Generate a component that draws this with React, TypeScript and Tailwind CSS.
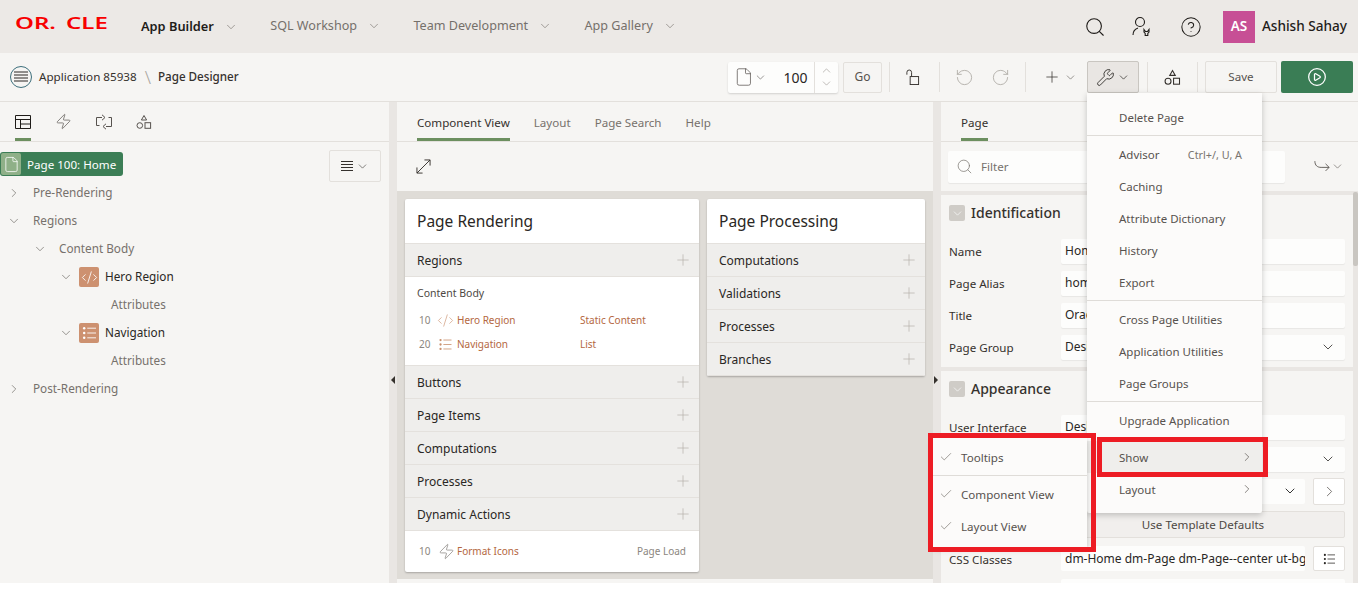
import React from 'react';
import { Check, ChevronDown, ChevronRight, ChevronUp, CircleHelp, CirclePlay, CodeXml, File, Plus, RotateCcw, RotateCw, Search, Wrench, Zap } from 'lucide-react';

const ShapesIcon = ({ className = '' }: { className?: string }) => (
  <svg viewBox="0 0 16 16" fill="none" stroke="currentColor" strokeWidth="1" className={className}>
    <path d="M8 1.5 10.6 6H5.4z" />
    <circle cx="3.8" cy="11.5" r="2.8" />
    <rect x="9" y="8.7" width="5.6" height="5.6" />
  </svg>
);

const DotList = ({ className = '' }: { className?: string }) => (
  <svg viewBox="0 0 16 16" fill="none" stroke="currentColor" className={className}>
    <circle cx="2.5" cy="2.5" r="1.4" fill="currentColor" stroke="none" />
    <circle cx="2.5" cy="8" r="1.4" fill="currentColor" stroke="none" />
    <circle cx="2.5" cy="13.5" r="1.4" fill="currentColor" stroke="none" />
    <path d="M6 2.5h10M6 8h10M6 13.5h10" strokeWidth="1" />
  </svg>
);

const NavItem = ({ label, active }: { label: string; active?: boolean }) => (
  <div className="flex items-center gap-[10px] mr-[32.4px]">
    <span className={active ? 'text-[12.8px] font-semibold text-[#1f1c19]' : 'text-[12.6px] text-[#75706b]'}>{label}</span>
    <ChevronDown size={14} strokeWidth={1.1} className="text-[#75706b]" />
  </div>
);

const Sep = () => <div className="w-px h-[30px] bg-[#e3e0dc]" />;

const TreeRow = ({ indent, label, open, dark, leaf, icon }: { indent: string; label: string; open?: boolean; dark?: boolean; leaf?: boolean; icon?: React.ReactNode }) => (
  <div className={`h-[28px] flex items-center ${indent}`}>
    {!leaf && (open ? <ChevronDown size={14} strokeWidth={1.2} className="text-[#6f6b66] mr-[12px]" /> : <ChevronRight size={14} strokeWidth={1.2} className="text-[#6f6b66] mr-[12px]" />)}
    {icon}
    <span className={dark ? 'text-[11.75px] text-[#2a2724]' : 'text-[11.75px] text-[#76716c]'}>{label}</span>
  </div>
);

const SectionRow = ({ label }: { label: string }) => (
  <div className="h-[33px] bg-[#efeeec] border-b border-[#e4e1dd] flex items-center justify-between pl-[12px] pr-[7px]">
    <span className="text-[12px] text-[#2a2724] pt-[1px]">{label}</span>
    <Plus size={18} strokeWidth={0.9} className="text-[#b3afa8]" />
  </div>
);

const Field = ({ label, value, select }: { label: string; value: string; select?: boolean }) => (
  <div className="h-[32px] flex items-center pl-[8px] pr-[8px]">
    <span className="w-[112px] pt-[2px] text-[11.6px] text-[#35312d]">{label}</span>
    <div className="flex-1 h-[25px] bg-[#fdfdfc] rounded-[2px] shadow-[0_1px_1px_rgba(0,0,0,0.06)] flex items-center justify-between px-[4px] text-[12px] text-[#2a2724]">
      <span className="whitespace-nowrap overflow-hidden">{value}</span>
      {select && <ChevronDown size={16} strokeWidth={1.2} className="mr-[5px]" />}
    </div>
  </div>
);

const SectionHead = ({ label }: { label: string }) => (
  <div className="h-[36px] flex items-center pl-[8px]">
    <div className="w-[16px] h-[16px] rounded-[2px] bg-[#cfccc7] flex items-center justify-center">
      <ChevronDown size={13} strokeWidth={1.2} className="text-white" />
    </div>
    <span className="ml-[6px] pb-[2px] text-[14px] font-medium text-[#35312d]">{label}</span>
  </div>
);

const MenuItem = ({ label, hint, arrow, hot }: { label: string; hint?: string; arrow?: boolean; hot?: boolean }) => (
  <div className={`h-[32px] flex items-center justify-between pl-[32px] pr-[8px] ${hot ? 'bg-[#efeeec]' : ''}`}>
    <span className="pt-[2px] text-[11.5px] text-[#57524e]">{label}</span>
    {hint && <span className="pt-[2px] text-[10.8px] text-[#79746f] mr-[12px]">{hint}</span>}
    {arrow && <ChevronRight size={14} strokeWidth={1.2} className="text-[#57524e]" />}
  </div>
);

const CheckItem = ({ label }: { label: string }) => (
  <div className="h-[32px] flex items-center pl-[6px]">
    <Check size={14} strokeWidth={1.2} className="text-[#79746f] mr-[8px]" />
    <span className="pt-[2px] text-[11.6px] text-[#57524e]">{label}</span>
  </div>
);

const App: React.FC = () => {
  return (
    <div className="relative w-[1358px] h-[594px] overflow-hidden bg-white font-['Noto_Sans',sans-serif]">
      {/* top bar */}
      <header className="h-[53px] bg-[#ece9e6] flex items-center">
        <div className="w-[141px] h-full pl-[15px] pt-[13px] flex overflow-hidden text-[16px] leading-[20px] font-semibold text-[#f80000]">
          <span className="w-[51px] inline-block origin-left scale-x-[1.5]">OR.</span>
          <span className="w-[40px] inline-block origin-left scale-x-[1.5]">CLE</span>
        </div>
        <NavItem label="App Builder" active />
        <NavItem label="SQL Workshop" />
        <NavItem label="Team Development" />
        <NavItem label="App Gallery" />
        <div className="ml-auto flex items-center pr-[11px] text-[#1f1c19]">
          <Search size={22} strokeWidth={1.2} />
          <svg viewBox="0 0 24 24" fill="none" stroke="currentColor" strokeWidth="1.1" className="w-[24px] h-[24px] ml-[24px]">
            <circle cx="10" cy="7" r="4.5" />
            <path d="M3 20c0-4 2-6 5-7M14 14.5l1.5 2h2l1.5-2v2.5l-1.2 1.5v2h-2.6v-2L14 17z" />
          </svg>
          <CircleHelp size={22} strokeWidth={1.1} className="ml-[26px]" />
          <div className="w-[32px] h-[32px] ml-[21px] bg-[#c74f95] flex items-center justify-center text-[13.5px] font-semibold text-white">AS</div>
          <span className="ml-[7px] text-[13.6px] font-medium text-[#1f1c19]">Ashish Sahay</span>
        </div>
      </header>

      {/* page designer toolbar */}
      <div className="h-[49px] bg-[#f6f5f3] border-b border-[#e3e0dc] flex items-center pl-[10px] pr-[5px]">
        <div className="w-[22px] h-[22px] rounded-full border border-[#3d6f7c] flex items-center justify-center">
          <svg viewBox="0 0 14 12" stroke="#2a2724" strokeWidth="1" className="w-[14px] h-[12px]"><path d="M0 1h14M0 4h14M0 7h14M0 10h14" /></svg>
        </div>
        <span className="ml-[7px] text-[11.65px] text-[#35312d]">Application 85938</span>
        <span className="ml-[8px] text-[18px] font-light leading-none text-[#aaa6a0]">\</span>
        <span className="ml-[7px] text-[11.65px] font-medium text-[#35312d]">Page Designer</span>

        <div className="ml-auto flex items-center">
          <div className="w-[110px] h-[31px] bg-[#fdfdfc] rounded-[2px] shadow-[0_1px_2px_rgba(0,0,0,0.15)] flex items-center">
            <File size={20} strokeWidth={0.9} className="ml-[6px] text-[#57524e]" />
            <ChevronDown size={13} strokeWidth={1.1} className="text-[#57524e]" />
            <span className="ml-[17px] w-[26px] text-[14px] text-[#2a2724]">100</span>
            <div className="ml-[5px] w-[24px] h-full border-l border-[#e3e0dc] flex flex-col items-center justify-center">
              <ChevronUp size={13} strokeWidth={1} className="text-[#8b8680]" />
              <ChevronDown size={13} strokeWidth={1} className="text-[#8b8680]" />
            </div>
          </div>
          <div className="ml-[5px] w-[39px] h-[31px] border border-[#e3e0dc] rounded-[2px] flex items-center justify-center text-[12px] text-[#57524e]">Go</div>
          <div className="ml-[7px]"><Sep /></div>
          <svg viewBox="0 0 16 18" fill="none" stroke="#35312d" strokeWidth="1" className="w-[15px] h-[17px] ml-[15px]">
            <rect x="5.5" y="8" width="9" height="8.5" />
            <path d="M2 6V3.5a2.5 2.5 0 0 1 5 0V8" />
          </svg>
          <div className="ml-[19px]"><Sep /></div>
          <RotateCcw size={19} strokeWidth={1} className="ml-[15px] text-[#a8a49d]" />
          <RotateCw size={19} strokeWidth={1} className="ml-[17px] text-[#a8a49d]" />
          <div className="ml-[15px]"><Sep /></div>
          <Plus size={18} strokeWidth={1} className="ml-[17px] text-[#35312d]" />
          <ChevronDown size={13} strokeWidth={1.1} className="ml-[3px] text-[#57524e]" />
          <div className="ml-[10px] w-[52px] h-[32px] bg-[#e9e6e3] border border-[#c9c6c1] rounded-[2px] flex items-center justify-center">
            <Wrench size={19} strokeWidth={1.1} className="text-[#2a2724]" />
            <ChevronDown size={13} strokeWidth={1.3} className="ml-[2px] text-[#2a2724]" />
          </div>
          <div className="ml-[8px]"><Sep /></div>
          <ShapesIcon className="w-[17px] h-[17px] ml-[16px] text-[#35312d]" />
          <div className="ml-[16px]"><Sep /></div>
          <div className="ml-[7px] w-[72px] h-[32px] border border-[#e3e0dc] rounded-[2px] flex items-center justify-center text-[11.6px] text-[#57524e]">Save</div>
          <div className="ml-[4px] w-[72px] h-[32px] bg-[#3a7d55] rounded-[2px] flex items-center justify-center">
            <CirclePlay size={20} strokeWidth={1.5} className="text-white" />
          </div>
        </div>
      </div>

      {/* three panes */}
      <main className="h-[481px] flex bg-[#e9e6e3]">
        <section className="relative w-[389px] bg-[#f6f5f3]">
          <div className="h-[40px] border-b border-[#e3e0dc] flex items-center pl-[15px] gap-[24px] text-[#57524e]">
            <div className="relative h-full w-[16px] flex items-center text-[#1f1c19]">
              <svg viewBox="0 0 16 14" fill="none" stroke="currentColor" strokeWidth="1" className="w-[16px] h-[14px]"><path d="M.5.5h15v13H.5zM.5 4.5h15M5.5 4.5v9M5.5 9h10" /></svg>
              <div className="absolute left-0 bottom-0 w-[16px] h-[3px] bg-[#6c8f5f]" />
            </div>
            <Zap size={17} strokeWidth={1} />
            <svg viewBox="0 0 16 16" fill="none" stroke="currentColor" strokeWidth="1" className="w-[16px] h-[16px]"><path d="M6 3.5H.5v8h3M10 12.5h5.5v-9h-3M6 .8l3 2.7-3 2.7M10 9.8l-3 2.7 3 2.7" /></svg>
            <ShapesIcon className="w-[16px] h-[16px]" />
          </div>
          <div className="h-[37px] flex items-start justify-between pt-[8px] pr-[8px]">
            <div className="h-[24px] w-[123px] mt-[2px] bg-[#3c7e56] rounded-[3px] flex items-center pl-[1px]">
              <div className="w-[20px] h-[22px] bg-[#8fb088] rounded-[2px] flex items-center justify-center">
                <File size={17} strokeWidth={1.1} className="text-white" />
              </div>
              <span className="ml-[6px] pt-[1px] text-[11.6px] text-white whitespace-nowrap">Page 100: Home</span>
            </div>
            <div className="w-[52px] h-[32px] border border-[#e3e0dc] rounded-[2px] flex items-center justify-center text-[#35312d]">
              <svg viewBox="0 0 12 10" stroke="currentColor" strokeWidth="1" className="w-[12px] h-[10px]"><path d="M0 .5h12M0 3.5h12M0 6.5h12M0 9.5h12" /></svg>
              <ChevronDown size={13} strokeWidth={1.1} className="ml-[3px]" />
            </div>
          </div>
          <TreeRow indent="pl-[7px]" label="Pre-Rendering" />
          <TreeRow indent="pl-[7px]" label="Regions" open />
          <TreeRow indent="pl-[33px]" label="Content Body" open />
          <TreeRow indent="pl-[59px]" label="Hero Region" open dark icon={
            <div className="w-[20px] h-[20px] -ml-[6px] mr-[6px] bg-[#cd9170] rounded-[2px] flex items-center justify-center"><CodeXml size={17} strokeWidth={1.2} className="text-white" /></div>
          } />
          <TreeRow indent="pl-[111px]" label="Attributes" leaf />
          <TreeRow indent="pl-[59px]" label="Navigation" open dark icon={
            <div className="w-[20px] h-[20px] -ml-[6px] mr-[6px] bg-[#cd9170] rounded-[2px] flex items-center justify-center"><DotList className="w-[16px] h-[14px] text-white" /></div>
          } />
          <TreeRow indent="pl-[111px]" label="Attributes" leaf />
          <TreeRow indent="pl-[7px]" label="Post-Rendering" />
          <div className="absolute left-[391px] top-[274px] w-0 h-0 border-y-[4px] border-y-transparent border-r-[4px] border-r-[#35312d]" />
        </section>

        <section className="relative w-[536px] ml-[8px] bg-[#f6f5f3] flex flex-col">
          <div className="h-[40px] border-b border-[#e3e0dc] flex pl-[20px] gap-[24px] text-[11.6px] text-[#76716c]">
            <div className="relative flex items-center pt-[2px] text-[#35312d]">
              Component View
              <div className="absolute left-0 right-0 bottom-0 h-[3px] bg-[#6c8f5f]" />
            </div>
            <div className="flex items-center pt-[2px]">Layout</div>
            <div className="flex items-center pt-[2px]">Page Search</div>
            <div className="flex items-center pt-[2px]">Help</div>
          </div>
          <div className="h-[49px] flex items-center pl-[19px]">
            <svg viewBox="0 0 16 16" fill="none" stroke="#35312d" strokeWidth="1" className="w-[15px] h-[15px]"><path d="M1 15 15 1M9 1h6v6M1 9v6h6" /></svg>
          </div>
          <div className="h-[388px] bg-[#dfdcd7] flex items-start gap-[8px] pl-[8px] pt-[8px]">
            <div className="w-[294px] bg-white rounded-[2px] shadow-[0_1px_2px_rgba(0,0,0,0.25)] overflow-hidden">
              <div className="h-[45px] border-b border-[#e4e1dd] flex items-center pl-[12px] pt-[2px] text-[15.5px] text-[#2a2724]">Page Rendering</div>
              <SectionRow label="Regions" />
              <div className="h-[89px] border-b border-[#e4e1dd] pl-[12px] pt-[9px]">
                <div className="text-[10.5px] h-[16px] text-[#4d4843]">Content Body</div>
                <div className="mt-[6px] h-[24px] flex items-center text-[10px] text-[#b4683f]">
                  <span className="w-[20px] pl-[2px] text-[#8b8680]">10</span>
                  <CodeXml size={17} strokeWidth={0.9} className="text-[#c9906d]" />
                  <span className="ml-[3px] w-[123px]">Hero Region</span>
                  <span>Static Content</span>
                </div>
                <div className="h-[24px] flex items-center text-[10px] text-[#b4683f]">
                  <span className="w-[20px] pl-[2px] text-[#8b8680]">20</span>
                  <DotList className="w-[16px] h-[13px] text-[#c9906d]" />
                  <span className="ml-[4px] w-[123px]">Navigation</span>
                  <span>List</span>
                </div>
              </div>
              <SectionRow label="Buttons" />
              <SectionRow label="Page Items" />
              <SectionRow label="Computations" />
              <SectionRow label="Processes" />
              <SectionRow label="Dynamic Actions" />
              <div className="h-[41px] flex items-center pl-[14px] pr-[13px] text-[10px]">
                <span className="w-[19px] text-[#8b8680]">10</span>
                <Zap size={17} strokeWidth={0.9} className="text-[#76716c]" />
                <span className="ml-[2px] text-[#b4683f]">Format Icons</span>
                <span className="ml-auto text-[#8b8680]">Page Load</span>
              </div>
            </div>
            <div className="w-[218px] bg-white rounded-[2px] shadow-[0_1px_2px_rgba(0,0,0,0.25)] overflow-hidden">
              <div className="h-[45px] border-b border-[#e4e1dd] flex items-center pl-[12px] pt-[2px] text-[15.5px] text-[#2a2724]">Page Processing</div>
              <SectionRow label="Computations" />
              <SectionRow label="Validations" />
              <SectionRow label="Processes" />
              <SectionRow label="Branches" />
            </div>
          </div>
          <div className="absolute left-[537px] top-[274px] w-0 h-0 border-y-[4px] border-y-transparent border-l-[4px] border-l-[#35312d]" />
        </section>

        <section className="relative w-[417px] ml-[8px] bg-[#f6f5f3] overflow-hidden">
          <div className="h-[40px] border-b border-[#e3e0dc] flex pl-[20px]">
            <div className="relative flex items-center pt-[2px] text-[11.6px] text-[#35312d]">
              Page
              <div className="absolute left-0 right-0 bottom-0 h-[3px] bg-[#6c8f5f]" />
            </div>
          </div>
          <div className="h-[49px] flex items-center pl-[7px]">
            <div className="w-[337px] h-[32px] bg-[#fdfdfc] rounded-[2px] shadow-[0_1px_1px_rgba(0,0,0,0.06)] flex items-center pl-[8px] text-[11.6px] text-[#76716c]">
              <Search size={17} strokeWidth={1} />
              <span className="ml-[8px]">Filter</span>
            </div>
            <svg viewBox="0 0 18 14" fill="none" stroke="#57524e" strokeWidth="1" className="w-[16px] h-[13px] ml-[29px]"><path d="M1 1c0 5 3 7 7 7h9M13 4l4 4-4 4" /></svg>
            <ChevronDown size={13} strokeWidth={1.1} className="ml-[1px] text-[#57524e]" />
          </div>
          <div className="h-[392px] bg-[#e9e6e3] pr-[5px] pt-[4px]">
            <div className="h-[172px] bg-[#f6f5f3]">
              <SectionHead label="Identification" />
              <div className="mt-[4px]">
                <Field label="Name" value="Home" />
                <Field label="Page Alias" value="home" />
                <Field label="Title" value="Oracle" />
                <Field label="Page Group" value="Design" select />
              </div>
            </div>
            <div className="mt-[4px] bg-[#f6f5f3] h-[220px]">
              <SectionHead label="Appearance" />
              <div className="mt-[4px]"><Field label="User Interface" value="Desktop" /></div>
              <Field label="" value="" select />
              <div className="h-[32px] flex items-center pl-[120px] pr-[8px] gap-[8px]">
                <div className="flex-1 h-[25px] bg-[#fdfdfc] rounded-[2px] flex items-center justify-end pr-[7px]"><ChevronDown size={16} strokeWidth={1.2} /></div>
                <div className="w-[32px] h-[27px] bg-white border border-[#e3e0dc] rounded-[2px] flex items-center justify-center text-[#57524e]"><ChevronRight size={17} strokeWidth={1.1} /></div>
              </div>
              <div className="mt-[4px] ml-[120px] mr-[8px] h-[27px] bg-[#f1efed] border border-[#e3e0dc] rounded-[2px] flex items-center justify-center text-[11.6px] text-[#4d4843]">Use Template Defaults</div>
              <div className="h-[41px] flex items-center pl-[8px] pr-[8px]">
                <span className="w-[112px] pt-[2px] text-[11.6px] text-[#35312d]">CSS Classes</span>
                <div className="w-[244px] h-[25px] bg-[#fdfdfc] rounded-[2px] px-[4px] flex items-center text-[12px] text-[#2a2724] overflow-hidden whitespace-nowrap">dm-Home dm-Page dm-Page--center ut-bg</div>
                <div className="ml-[8px] w-[32px] h-[25px] bg-white border border-[#e3e0dc] rounded-[2px] flex items-center justify-center"><DotList className="w-[14px] h-[12px] text-[#2a2724]" /></div>
              </div>
              <div className="ml-[120px] mr-[8px] h-[10px] bg-[#fdfdfc] rounded-[2px]" />
            </div>
          </div>
          <div className="absolute right-0 top-[90px] w-[5px] h-[74px] bg-[#c9c6c1] rounded-[2px]" />
        </section>
      </main>

      {/* tools menu */}
      <div className="absolute left-[1087px] top-[93px] w-[175px] bg-[#fcfbfa] rounded-b-[2px] shadow-[0_2px_6px_rgba(0,0,0,0.22)] pt-[8px] pb-[8px]">
        <MenuItem label="Delete Page" />
        <div className="my-[2px] h-px bg-[#dfdcd8]" />
        <MenuItem label="Advisor" hint="Ctrl+/, U, A" />
        <MenuItem label="Caching" />
        <MenuItem label="Attribute Dictionary" />
        <MenuItem label="History" />
        <MenuItem label="Export" />
        <div className="my-[2px] h-px bg-[#dfdcd8]" />
        <MenuItem label="Cross Page Utilities" />
        <MenuItem label="Application Utilities" />
        <MenuItem label="Page Groups" />
        <div className="my-[2px] h-px bg-[#dfdcd8]" />
        <MenuItem label="Upgrade Application" />
        <div className="h-[5px]" />
        <MenuItem label="Show" arrow hot />
        <MenuItem label="Layout" arrow />
      </div>

      {/* show submenu */}
      <div className="absolute left-[933px] top-[438px] w-[154px] h-[109px] bg-[#fcfbfa] shadow-[0_2px_6px_rgba(0,0,0,0.22)] pt-[3px]">
        <CheckItem label="Tooltips" />
        <div className="my-[2px] h-px bg-[#dfdcd8]" />
        <CheckItem label="Component View" />
        <CheckItem label="Layout View" />
      </div>

      {/* annotation boxes */}
      <div className="absolute left-[928px] top-[433px] w-[168px] h-[119px] border-[5px] border-[#ed1c24]" />
      <div className="absolute left-[1097px] top-[437px] w-[171px] h-[40px] border-[5px] border-[#ed1c24]" />
    </div>
  );
};

export default App;
